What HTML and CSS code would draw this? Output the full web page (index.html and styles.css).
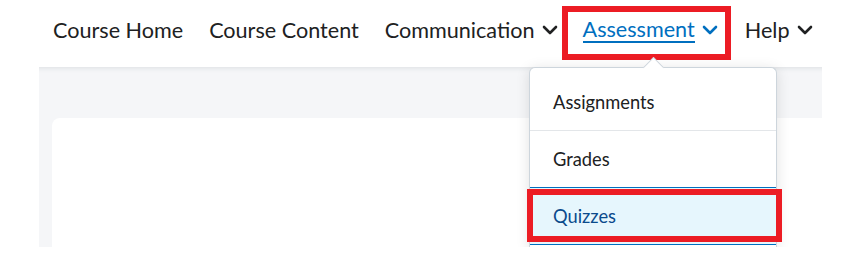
FILE: index.html
```html
<!DOCTYPE html>
<html lang="en">
<head>
  <meta charset="UTF-8">
  <title>Course Navigation</title>
  <link rel="stylesheet" href="styles.css">
</head>
<body>
  <nav class="navbar">
    <a class="nav-link" href="#">Course Home</a>
    <a class="nav-link" href="#">Course Content</a>
    <a class="nav-link" href="#">Communication
      <svg class="chev" viewBox="0 0 16 16"><path d="M2 5l6 6 6-6"/></svg>
    </a>
    <a class="nav-link active marked" href="#"><span class="label">Assessment</span>
      <svg class="chev" viewBox="0 0 16 16"><path d="M2 5l6 6 6-6"/></svg>
    </a>
    <a class="nav-link" href="#">Help
      <svg class="chev" viewBox="0 0 16 16"><path d="M2 5l6 6 6-6"/></svg>
    </a>
  </nav>

  <div class="page">
    <div class="card"></div>
  </div>

  <!-- Assessment dropdown -->
  <div class="dropdown">
    <div class="pointer"></div>
    <ul class="menu">
      <li class="menu-item">Assignments</li>
      <li class="menu-item">Grades</li>
      <li class="menu-item selected marked">Quizzes</li>
    </ul>
  </div>
</body>
</html>
```

FILE: styles.css
```css
body {
  font-family: Lato, "Noto Sans", sans-serif;
  color: #202122;
  background: #fff;
  margin: 0;
  width: 863px;
  position: relative;
}
.navbar {
  display: flex;
  align-items: flex-start;
  gap: 26px;
  height: 67px;
  padding: 12px 0 0 53px;
  box-sizing: border-box;
}
.nav-link {
  display: flex;
  align-items: center;
  gap: 7px;
  font-size: 21.6px;
  color: #202122;
  text-decoration: none;
  height: 36px;
  padding-bottom: 6px;
}
.chev {
  width: 16px;
  height: 16px;
  fill: none;
  stroke: #202122;
  stroke-width: 2.6;
  stroke-linecap: round;
  stroke-linejoin: round;
}
.nav-link.active {
  color: #006fbf;
}
.nav-link.active .label {
  border-bottom: 2px solid #006fbf;
  line-height: 24px;
}
.nav-link.active .chev {
  stroke: #006fbf;
}
.nav-link.marked {
  outline: 6px solid #ec1c24;
  padding-left: 15px;
  padding-right: 7px;
  margin: 0 -6px 0 -16px;
}

.page {
  margin: 0 41px 0 39px;
  height: 180px;
  background: #f5f6f8;
  border-top: 1px solid #e6e8eb;
  box-shadow: inset 0 5px 4px -4px #e3e5e8;
  padding: 50px 0 0 13px;
  box-sizing: border-box;
}
.card {
  background: #fff;
  height: 100%;
  border-radius: 8px 0 0 0;
}

/* dropdown menu */
.dropdown {
  position: absolute;
  left: 529px;
  top: 67px;
  width: 248px;
  height: 180px;
  background: #fff;
  border: 1px solid #cdd5dc;
  border-bottom: none;
  border-radius: 6px 6px 0 0;
  box-sizing: border-box;
  box-shadow: 0 2px 14px rgba(0, 0, 0, 0.12);
  padding-top: 6px;
}
.pointer {
  position: absolute;
  left: 116px;
  top: -8px;
  width: 14px;
  height: 14px;
  background: #fff;
  border-top: 1px solid #cdd5dc;
  border-left: 1px solid #cdd5dc;
  transform: rotate(45deg);
}
.menu {
  list-style: none;
  margin: 0;
  padding: 0;
}
.menu-item {
  height: 56px;
  display: flex;
  align-items: center;
  padding-left: 23px;
  font-size: 18.3px;
  border-bottom: 1px solid #e3e6e9;
  position: relative;
}
.menu-item.selected {
  background: #e6f6fd;
  color: #0a4a8c;
  border-top: 1px solid #006fbf;
  border-bottom: 1px solid #006fbf;
  margin-top: -1px;
}
.menu-item.marked::after {
  content: "";
  position: absolute;
  top: 1px;
  bottom: 2px;
  left: -3px;
  right: -6px;
  border: 6px solid #ec1c24;
}
```
